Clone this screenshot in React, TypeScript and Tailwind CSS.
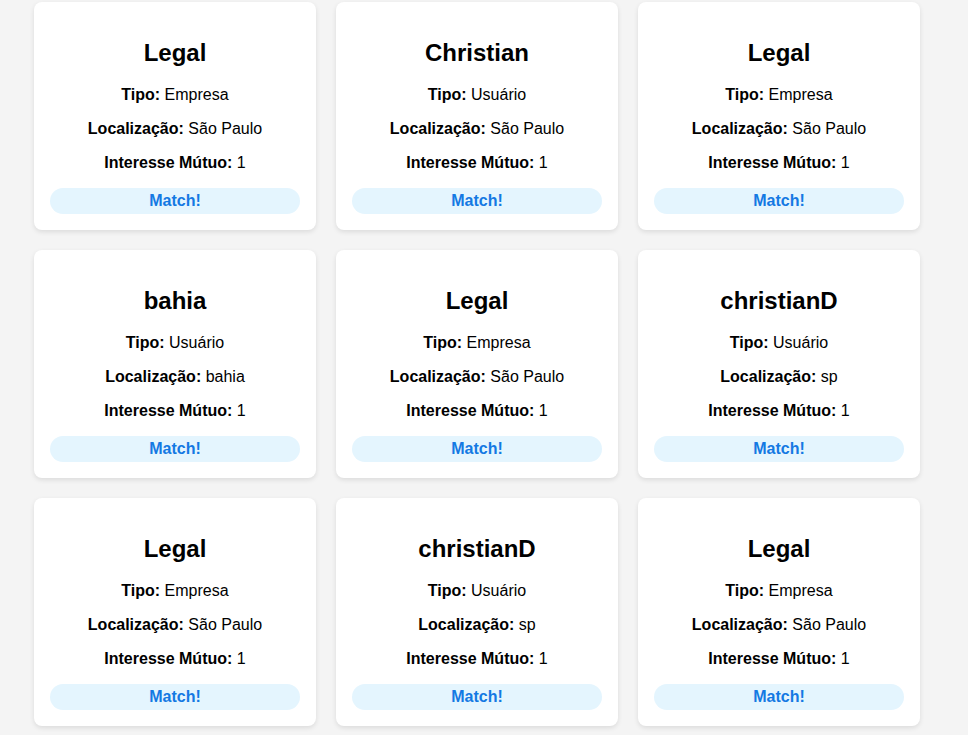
import React from "react";

type Card = { name: string; tipo: string; loc: string };

const cards: Card[] = [
  { name: "Legal", tipo: "Empresa", loc: "São Paulo" },
  { name: "Christian", tipo: "Usuário", loc: "São Paulo" },
  { name: "Legal", tipo: "Empresa", loc: "São Paulo" },
  { name: "bahia", tipo: "Usuário", loc: "bahia" },
  { name: "Legal", tipo: "Empresa", loc: "São Paulo" },
  { name: "christianD", tipo: "Usuário", loc: "sp" },
  { name: "Legal", tipo: "Empresa", loc: "São Paulo" },
  { name: "christianD", tipo: "Usuário", loc: "sp" },
  { name: "Legal", tipo: "Empresa", loc: "São Paulo" },
];

export default function App() {
  return (
    <div
      className="min-h-[735px] bg-[#f4f4f4] text-black"
      style={{ fontFamily: '"Liberation Sans", Arial, sans-serif' }}
    >
      <div className="grid grid-cols-[282px_282px_282px] gap-5 pl-[34px] pt-[2px] pb-4">
        {cards.map((c, i) => (
          <div
            key={i}
            className="bg-white rounded-lg p-4 text-center shadow-[0_2px_5px_rgba(0,0,0,0.1)]"
          >
            <h2 className="text-[24px] font-bold leading-[28px] mt-[21px] mb-[19px]">{c.name}</h2>
            <p className="text-[16px] leading-[18px] mb-4">
              <b>Tipo:</b> {c.tipo}
            </p>
            <p className="text-[16px] leading-[18px] mb-4">
              <b>Localização:</b> {c.loc}
            </p>
            <p className="text-[16px] leading-[18px] mb-[16px]">
              <b>Interesse Mútuo:</b> 1
            </p>
            <button className="w-full h-[26px] rounded-full bg-[#e4f5fe] text-[#1479e3] font-bold text-[16px] leading-[18px]">
              Match!
            </button>
          </div>
        ))}
      </div>
    </div>
  );
}
